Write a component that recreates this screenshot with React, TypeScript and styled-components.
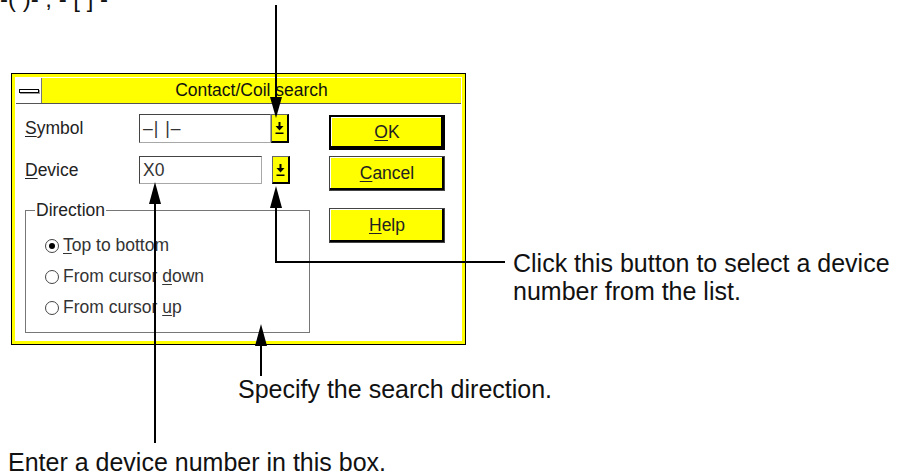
import styled, { createGlobalStyle } from 'styled-components';

const GlobalStyle = createGlobalStyle`
  html, body {
    margin: 0;
    padding: 0;
    background: #fff;
  }
  body {
    font-family: "Liberation Sans", Arial, sans-serif;
  }
`;

const Page = styled.div`
  position: relative;
  width: 900px;
  height: 474px;
  overflow: hidden;
  background: #fff;
  color: #111;
`;

const TopNote = styled.div`
  margin-top: -13px;
  font-size: 24px;
  line-height: 24px;
  white-space: pre;
`;

const Row = styled.div`
  display: flex;
  align-items: flex-start;
  margin-top: 62px;
`;

const Note = styled.p<{ $left: number; $top: number; $lh?: number }>`
  margin: ${(p) => p.$top}px 0 0 ${(p) => p.$left}px;
  font-size: 25px;
  line-height: ${(p) => p.$lh ?? 28}px;
  color: #111;
  white-space: nowrap;
`;

// dialog frame
const Dialog = styled.div`
  margin-left: 11px;
  width: 455px;
  box-sizing: border-box;
  border: 1px solid #000;
  padding: 3px;
  background: #ffff00;
  font-size: 17.5px;
  color: #222;
`;

const Inner = styled.div`
  border: 1px solid #fff;
  background: #fff;
`;

const TitleBar = styled.div`
  display: flex;
  height: 25px;
  background: #ffff00;
  border-bottom: 1px solid #555;
`;

const SysMenu = styled.div`
  width: 25px;
  background: #fff;
  border-right: 1px solid #777;
  display: flex;
  align-items: center;
  justify-content: center;
`;

const SysBar = styled.span`
  width: 18px;
  height: 2px;
  border: 1px solid #000;
  background: #fff;
  box-shadow: 1px 1px 0 #999;
`;

const Title = styled.div`
  flex: 1;
  display: flex;
  align-items: center;
  justify-content: center;
  color: #111;
`;

const Client = styled.div`
  display: flex;
  gap: 19px;
  padding: 10px 15px 7px 9px;
`;

const LeftCol = styled.div`
  width: 285px;
  display: flex;
  flex-direction: column;
`;

const FieldRow = styled.div<{ $h: number; $mt?: number }>`
  display: grid;
  grid-template-columns: 114px auto;
  align-items: center;
  height: ${(p) => p.$h}px;
  margin-top: ${(p) => p.$mt ?? 0}px;
`;

const Field = styled.div<{ $gap?: number }>`
  display: flex;
  height: 100%;
  gap: ${(p) => p.$gap ?? 0}px;
`;

const TextBox = styled.div<{ $w: number; $spacing?: number }>`
  width: ${(p) => p.$w}px;
  height: 100%;
  box-sizing: border-box;
  border: 1px solid #a8a8a8;
  border-top-color: #444;
  border-left-color: #444;
  padding-left: 3px;
  display: flex;
  align-items: center;
  background: #fff;
  color: #333;
  letter-spacing: ${(p) => p.$spacing ?? 0}px;
  white-space: pre;
`;

const DropButton = styled.div`
  width: 18px;
  height: 100%;
  box-sizing: border-box;
  background: #ffff00;
  border: 1px solid #666;
  border-right: 2px solid #000;
  border-bottom: 2px solid #000;
  display: flex;
  align-items: center;
  justify-content: center;
`;

const Key = styled.span`
  text-decoration: underline;
  text-underline-offset: 2px;
  text-decoration-thickness: 1px;
`;

const Group = styled.fieldset`
  margin: 17px 0 0 0;
  padding: 11px 0 9px 0;
  border: 1px solid #777;
  min-width: 0;
`;

const Legend = styled.legend`
  margin-left: 9px;
  padding: 0 1px;
  line-height: 18px;
`;

const RadioList = styled.div`
  display: flex;
  flex-direction: column;
  padding-left: 19px;
`;

const RadioRow = styled.div`
  display: flex;
  align-items: center;
  gap: 4px;
  height: 31px;
  color: #333;
`;

const RadioMark = styled.span<{ $on?: boolean }>`
  width: 14px;
  height: 14px;
  box-sizing: border-box;
  border-radius: 50%;
  border: 1px solid #444;
  display: flex;
  align-items: center;
  justify-content: center;
  &::after {
    content: '';
    width: 6px;
    height: 6px;
    border-radius: 50%;
    background: #000;
    display: ${(p) => (p.$on ? 'block' : 'none')};
  }
`;

const ButtonCol = styled.div`
  width: 116px;
  display: flex;
  flex-direction: column;
  padding-top: 1px;
`;

const PushButton = styled.div<{ $default?: boolean; $mt?: number }>`
  height: 35px;
  margin-top: ${(p) => p.$mt ?? 0}px;
  box-sizing: border-box;
  background: #ffff00;
  border: ${(p) => (p.$default ? '2px solid #000' : '1px solid #444')};
  box-shadow: inset -2px -2px 0 #000, inset 1px 1px 0 #fff;
  display: flex;
  align-items: center;
  justify-content: center;
  color: #222;
`;

const Callouts = styled.svg`
  position: absolute;
  left: 0;
  top: 0;
  pointer-events: none;
`;

const DownArrow = () => (
  <svg width="9" height="12" viewBox="0 0 9 12">
    <rect x="3.5" y="0" width="2" height="4" fill="#000" />
    <polygon points="0.5,4 8.5,4 4.5,8.5" fill="#000" />
    <rect x="0.5" y="10.5" width="8" height="1.5" fill="#000" />
  </svg>
);

const App = () => {
  return (
    <>
      <GlobalStyle />
      <Page>
        <TopNote>-( )- , - [ ] -</TopNote>
        <Row>
          <Dialog>
            <Inner>
              <TitleBar>
                <SysMenu>
                  <SysBar />
                </SysMenu>
                <Title>Contact/Coil search</Title>
              </TitleBar>
              <Client>
                <LeftCol>
                  <FieldRow $h={29}>
                    <span>
                      <Key>S</Key>ymbol
                    </span>
                    <Field>
                      <TextBox $w={132} $spacing={1}>
                        –| |–
                      </TextBox>
                      <DropButton>
                        <DownArrow />
                      </DropButton>
                    </Field>
                  </FieldRow>
                  <FieldRow $h={28} $mt={13}>
                    <span>
                      <Key>D</Key>evice
                    </span>
                    <Field $gap={10}>
                      <TextBox $w={123}>X0</TextBox>
                      <DropButton>
                        <DownArrow />
                      </DropButton>
                    </Field>
                  </FieldRow>
                  <Group>
                    <Legend>Direction</Legend>
                    <RadioList>
                      <RadioRow>
                        <RadioMark $on />
                        <span>
                          <Key>T</Key>op to bottom
                        </span>
                      </RadioRow>
                      <RadioRow>
                        <RadioMark />
                        <span>
                          From cursor <Key>d</Key>own
                        </span>
                      </RadioRow>
                      <RadioRow>
                        <RadioMark />
                        <span>
                          From cursor <Key>u</Key>p
                        </span>
                      </RadioRow>
                    </RadioList>
                  </Group>
                </LeftCol>
                <ButtonCol>
                  <PushButton $default>
                    <span>
                      <Key>O</Key>K
                    </span>
                  </PushButton>
                  <PushButton $mt={6}>
                    <span>
                      <Key>C</Key>ancel
                    </span>
                  </PushButton>
                  <PushButton $mt={17}>
                    <span>
                      <Key>H</Key>elp
                    </span>
                  </PushButton>
                </ButtonCol>
              </Client>
            </Inner>
          </Dialog>
          <Note $left={47} $top={176}>
            Click this button to select a device
            <br />
            number from the list.
          </Note>
        </Row>
        <Note $left={238} $top={30}>
          Specify the search direction.
        </Note>
        <Note $left={8} $top={47} $lh={24}>
          Enter a device number in this box.
        </Note>

        <Callouts width="900" height="474" viewBox="0 0 900 474">
          <g stroke="#000" strokeWidth="2" fill="none">
            <line x1="276" y1="5" x2="276" y2="100" />
            <polyline points="276,205 276,262 505,262" />
            <line x1="155" y1="200" x2="155" y2="443" />
            <line x1="261" y1="343" x2="261" y2="376" />
          </g>
          <g fill="#000">
            <polygon points="270,97 282,97 276,118" />
            <polygon points="276,186 270,208 282,208" />
            <polygon points="155,182 149,204 161,204" />
            <polygon points="261,324 255,346 267,346" />
          </g>
        </Callouts>
      </Page>
    </>
  );
};

export default App;
